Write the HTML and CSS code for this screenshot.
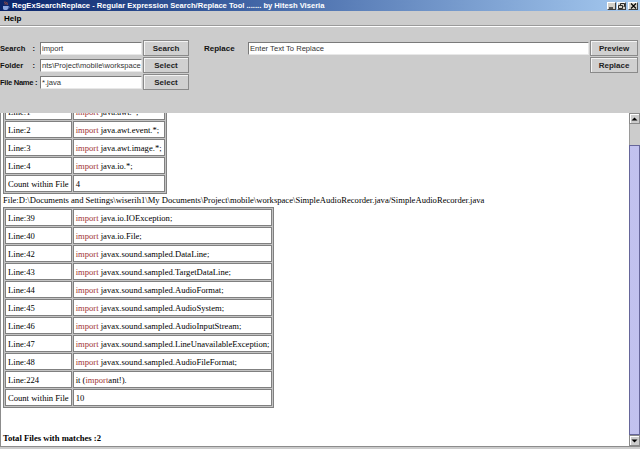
FILE: index.html
```html
<!DOCTYPE html>
<html>
<head>
<meta charset="utf-8">
<title>RegExSearchReplace</title>
<link rel="stylesheet" href="styles.css">
</head>
<body>
<div class="window">
  <div class="titlebar">
    <svg class="appicon" viewBox="0 0 8 10" width="8" height="10">
      <path d="M3 0.5c-1 1 1 1.5 0 3M5 1c-1 1 1 1.5 0 3" stroke="#e06030" fill="none" stroke-width="0.8"/>
      <path d="M1 5h5v2.5a1.8 1.8 0 0 1-1.8 1.5h-1.4a1.8 1.8 0 0 1-1.8-1.5z" fill="#8aa4e0"/>
      <path d="M6 5.5h1v1.5h-1" stroke="#8aa4e0" fill="none" stroke-width="0.7"/>
    </svg>
    <span class="title">RegExSearchReplace - Regular Expression Search/Replace Tool ....... by Hitesh Viseria</span>
    <div class="wbtns">
      <span class="wbtn"><svg viewBox="0 0 7 6" width="7" height="6"><path d="M1 5h4" stroke="#000" stroke-width="1.2"/></svg></span>
      <span class="wbtn"><svg viewBox="0 0 7 6" width="7" height="6"><path d="M2.5 0.5h4v3h-1M2.5 0.5v1.5M0.5 2.5h4v3h-4z" stroke="#000" fill="none" stroke-width="0.8"/></svg></span>
      <span class="wbtn close"><svg viewBox="0 0 7 6" width="7" height="6"><path d="M1 0.5l5 5M6 0.5l-5 5" stroke="#000" stroke-width="1.1"/></svg></span>
    </div>
  </div>

  <div class="menubar"><span class="menu">Help</span></div>

  <div class="controls">
    <div class="lbl"><span>Search</span><span class="colon">:</span></div>
    <div class="field"><div class="input">import</div></div>
    <div class="btn">Search</div>
    <div class="rlbl">Replace</div>
    <div class="field"><div class="input">Enter Text To Replace</div></div>
    <div class="btn">Preview</div>

    <div class="lbl"><span>Folder</span><span class="colon">:</span></div>
    <div class="field"><div class="input">nts\Project\mobile\workspace</div></div>
    <div class="btn">Select</div>
    <div class="empty"></div>
    <div class="empty"></div>
    <div class="btn">Replace</div>

    <div class="lbl tight"><span>File Name :</span></div>
    <div class="field"><div class="input">*.java</div></div>
    <div class="btn">Select</div>
  </div>

  <div class="results">
    <div class="pane">
      <div class="doc">
        <table class="hits">
          <tr><td>Line:1</td><td><span class="kw">import</span> java.awt.*;</td></tr>
          <tr><td>Line:2</td><td><span class="kw">import</span> java.awt.event.*;</td></tr>
          <tr><td>Line:3</td><td><span class="kw">import</span> java.awt.image.*;</td></tr>
          <tr><td>Line:4</td><td><span class="kw">import</span> java.io.*;</td></tr>
          <tr><td>Count within File</td><td>4</td></tr>
        </table>
        <div class="file">File:D:\Documents and Settings\wiserih1\My Documents\Project\mobile\workspace\SimpleAudioRecorder.java/SimpleAudioRecorder.java</div>
        <table class="hits">
          <tr><td>Line:39</td><td><span class="kw">import</span> java.io.IOException;</td></tr>
          <tr><td>Line:40</td><td><span class="kw">import</span> java.io.File;</td></tr>
          <tr><td>Line:42</td><td><span class="kw">import</span> javax.sound.sampled.DataLine;</td></tr>
          <tr><td>Line:43</td><td><span class="kw">import</span> javax.sound.sampled.TargetDataLine;</td></tr>
          <tr><td>Line:44</td><td><span class="kw">import</span> javax.sound.sampled.AudioFormat;</td></tr>
          <tr><td>Line:45</td><td><span class="kw">import</span> javax.sound.sampled.AudioSystem;</td></tr>
          <tr><td>Line:46</td><td><span class="kw">import</span> javax.sound.sampled.AudioInputStream;</td></tr>
          <tr><td>Line:47</td><td><span class="kw">import</span> javax.sound.sampled.LineUnavailableException;</td></tr>
          <tr><td>Line:48</td><td><span class="kw">import</span> javax.sound.sampled.AudioFileFormat;</td></tr>
          <tr><td>Line:224</td><td>it (<span class="kw">import</span>ant!).</td></tr>
          <tr><td>Count within File</td><td>10</td></tr>
        </table>
        <div class="total">Total Files with matches :2</div>
      </div>
    </div>
    <div class="vscroll">
      <div class="sbtn"><svg viewBox="0 0 7 4" width="7" height="4"><path d="M0.5 3.5L3.5 0.5L6.5 3.5z" fill="#000"/></svg></div>
      <div class="strack"></div>
      <div class="thumb"></div>
      <div class="sbtn"><svg viewBox="0 0 7 4" width="7" height="4"><path d="M0.5 0.5L3.5 3.5L6.5 0.5z" fill="#000"/></svg></div>
    </div>
  </div>
  <div class="status"></div>
</div>
</body>
</html>
```

FILE: styles.css
```css
html, body {
  margin: 0;
  padding: 0;
  background: #cccccc;
}

.window {
  width: 640px;
  height: 449px;
  display: flex;
  flex-direction: column;
  overflow: hidden;
  background: #cccccc;
  font-family: "Liberation Sans", Arial, sans-serif;
}

/* Title bar */
.titlebar {
  height: 11px;
  flex: none;
  display: flex;
  align-items: center;
  padding-left: 2px;
  background: linear-gradient(to right, #0a246a 0%, #3a5ea0 35%, #a6caf0 100%);
  color: #ffffff;
  font-weight: bold;
  font-size: 7.6px;
}

.appicon {
  flex: none;
  margin-right: 2px;
}

.title {
  flex: 1;
  white-space: nowrap;
  overflow: hidden;
}

.wbtns {
  display: flex;
  gap: 1px;
  margin-right: 2px;
}

.wbtn {
  width: 9px;
  height: 8px;
  box-sizing: border-box;
  background: #d4d0c8;
  border: 1px solid;
  border-color: #ffffff #404040 #404040 #ffffff;
  display: flex;
  align-items: center;
  justify-content: center;
}

.wbtn.close {
  margin-left: 1px;
  width: 10px;
}

.wbtn svg {
  display: block;
}

/* Menu bar */
.menubar {
  height: 14px;
  flex: none;
  display: flex;
  align-items: center;
  padding-left: 4px;
  border-bottom: 1px solid #9a9a9a;
  font-weight: bold;
  font-size: 8px;
  color: #000;
}

/* Controls */
.controls {
  height: 87px;
  flex: none;
  box-sizing: border-box;
  padding-top: 14px;
  box-shadow: inset 0 1px 0 #ffffff;
  display: grid;
  grid-template-columns: 40px 103px 46px 59px 342px 48px;
  grid-template-rows: 16px 16px 16px;
  row-gap: 1px;
  align-content: start;
}

.lbl {
  display: flex;
  align-items: center;
  font-weight: bold;
  font-size: 7.6px;
  color: #111;
  white-space: nowrap;
}

.lbl.tight {
  letter-spacing: -0.3px;
}

.colon {
  margin-left: auto;
  padding-right: 5px;
}

.rlbl {
  display: flex;
  align-items: center;
  padding-left: 15px;
  font-weight: bold;
  font-size: 8px;
  color: #111;
}

.field {
  display: flex;
  align-items: center;
  padding-right: 1px;
  min-width: 0;
}

.input {
  flex: 1;
  min-width: 0;
  height: 13px;
  box-sizing: border-box;
  background: #ffffff;
  border: 1px solid;
  border-color: #7a7a7a #e8e8e8 #e8e8e8 #7a7a7a;
  padding-left: 1px;
  font-size: 7.6px;
  line-height: 11px;
  color: #333;
  white-space: nowrap;
  overflow: hidden;
}

.btn {
  display: flex;
  align-items: center;
  justify-content: center;
  box-sizing: border-box;
  background: #d0d0d0;
  border: 1px solid #8a8a8a;
  box-shadow: inset 1px 1px 0 #f4f4f4;
  font-weight: bold;
  font-size: 8px;
  color: #222;
}

/* Results */
.results {
  height: 333px;
  flex: none;
  display: flex;
  background: #ffffff;
}

.pane {
  flex: 1;
  overflow: hidden;
  border-left: 1px solid #8c8c8c;
  padding-left: 2px;
  background: #ffffff;
}

.doc {
  margin-top: -12px;
  font-family: "Liberation Serif", "Times New Roman", serif;
  font-size: 8.6px;
  color: #000;
}

.hits {
  border-collapse: separate;
  border-spacing: 1px;
  border: 1px solid #808080;
  background: #c4c4c4;
}

.hits td {
  background: #ffffff;
  border: 1px solid #808080;
  padding: 3px 2px 2px;
  line-height: 10px;
  white-space: nowrap;
}

.kw {
  color: #a03434;
}

.file {
  line-height: 13px;
  white-space: nowrap;
}

.total {
  margin-top: 24px;
  line-height: 12px;
  font-weight: bold;
}

/* Scrollbar */
.vscroll {
  width: 11px;
  flex: none;
  display: flex;
  flex-direction: column;
  background: #cccccc;
}

.sbtn {
  height: 11px;
  flex: none;
  box-sizing: border-box;
  background: #cccccc;
  border: 1px solid #8a8a8a;
  box-shadow: inset 1px 1px 0 #ffffff;
  display: flex;
  align-items: center;
  justify-content: center;
}

.sbtn svg {
  display: block;
}

.strack {
  height: 21px;
  flex: none;
  background: #cccccc;
  border-left: 1px solid #9a9a9a;
}

.thumb {
  flex: 1;
  box-sizing: border-box;
  border: 1px solid #66669a;
  background-color: #9d9dd2;
  background-image: radial-gradient(circle, #d6d6ff 0.6px, transparent 0.9px);
  background-size: 2px 2px;
}

.status {
  flex: 1;
  border-top: 1px solid #8c8c8c;
  background: #cccccc;
}
```
